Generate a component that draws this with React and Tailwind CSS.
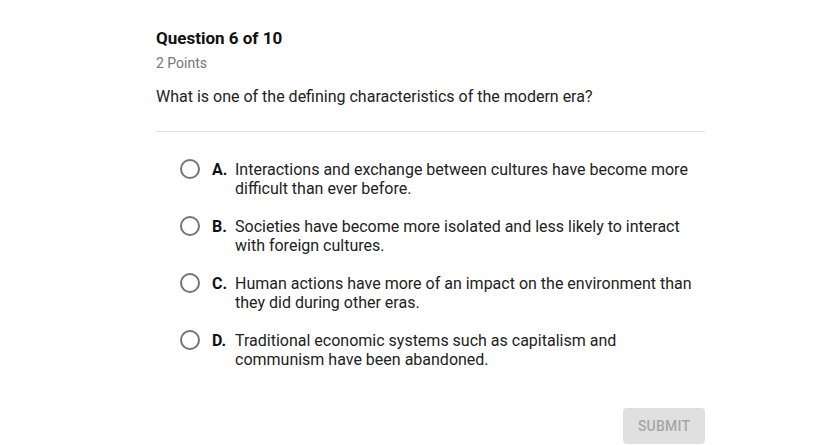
import React, { useState } from 'react';

const options = [
  { letter: 'A.', text: ['Interactions and exchange between cultures have become more', 'difficult than ever before.'] },
  { letter: 'B.', text: ['Societies have become more isolated and less likely to interact', 'with foreign cultures.'] },
  { letter: 'C.', text: ['Human actions have more of an impact on the environment than', 'they did during other eras.'] },
  { letter: 'D.', text: ['Traditional economic systems such as capitalism and', 'communism have been abandoned.'] },
];

export default function App() {
  const [selected, setSelected] = useState(null);

  return (
    <div className="w-[826px] h-[445px] bg-white overflow-hidden font-['Roboto',sans-serif] text-[#222]">
      <div className="ml-[156px] w-[549px] pt-[28px]">
        <h1 className="text-[17px] leading-[20px] font-bold text-[#111]">Question 6 of 10</h1>
        <div className="mt-[6px] text-[14px] leading-[18px] text-[#757575]">2 Points</div>
        <div className="mt-[16px] text-[16px] leading-[18px] text-[#222]">
          What is one of the defining characteristics of the modern era?
        </div>
        <div className="mt-[25px] border-t border-[#e0e0e0]" />

        <div className="pl-[24px] pt-[28px] flex flex-col gap-[19px]">
          {options.map((o, i) => (
            <label key={i} className="flex items-start cursor-pointer" onClick={() => setSelected(i)}>
              <span className="mt-[-1px] w-[20px] h-[20px] rounded-full border-2 border-[#757575] flex items-center justify-center shrink-0">
                {selected === i && <span className="w-[10px] h-[10px] rounded-full bg-[#757575]" />}
              </span>
              <span className="ml-[12px] w-[23px] text-[16px] leading-[19px] font-bold text-[#111]">{o.letter}</span>
              <span className="text-[16px] leading-[19px] text-[#222]">
                {o.text[0]}
                <br />
                {o.text[1]}
              </span>
            </label>
          ))}
        </div>

        <div className="flex justify-end mt-[39px]">
          <button className="w-[82px] h-[36px] rounded-[4px] bg-[#e0e0e0] text-[#a6a6a6] text-[14px] font-medium tracking-[0.2px]">
            SUBMIT
          </button>
        </div>
      </div>
    </div>
  );
}
